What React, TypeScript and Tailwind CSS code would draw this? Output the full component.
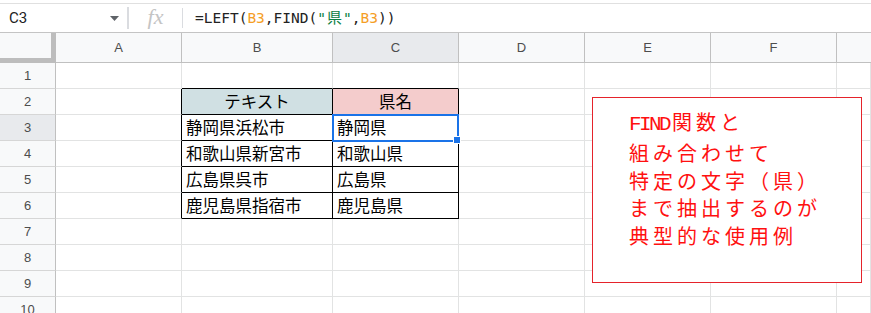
import React from 'react';

const COLS = ['A', 'B', 'C', 'D', 'E', 'F', ''];

// B2:C6 の内容
const cells: Record<string, string> = {
  'B2': 'テキスト',
  'C2': '県名',
  'B3': '静岡県浜松市',
  'C3': '静岡県',
  'B4': '和歌山県新宮市',
  'C4': '和歌山県',
  'B5': '広島県呉市',
  'C5': '広島県',
  'B6': '鹿児島県指宿市',
  'C6': '鹿児島県',
};

const FormulaBar: React.FC = () => (
  <div className="pt-[3px] bg-white">
    <div className="h-[30px] border-t border-b border-t-[#e0e0e0] border-b-[#c4c4c4] flex items-center">
      <div className="w-[127px] h-full flex items-center pl-[9px] pr-[8px] justify-between">
        <span className="text-[15px] text-[#222] font-['Roboto','Liberation_Sans',sans-serif]">C3</span>
        <svg width="9" height="5" viewBox="0 0 9 5">
          <path d="M0 0 L9 0 L4.5 5 Z" fill="#5f6368" />
        </svg>
      </div>
      <div className="w-[2px] h-[22px] bg-[#dadce0]" />
      <div className="w-[53px] flex items-center justify-center">
        <span className="italic text-[22px] leading-none text-[#c4c4c4] font-['Liberation_Serif',serif] -mt-[2px]">fx</span>
      </div>
      <div className="w-[1px] h-[20px] bg-[#dadce0]" />
      <div className="pl-[12px] text-[14.5px] text-[#222] font-['DejaVu_Sans_Mono',monospace] whitespace-pre">
        =LEFT(<span className="text-[#f59e26]">B3</span>,FIND(
        <span className="text-[#0b8043]">"</span>
        <span className="text-[#0b8043] inline-block w-[17px] text-center font-['Noto_Sans_CJK_JP',sans-serif] text-[15px]">県</span>
        <span className="text-[#0b8043]">"</span>,<span className="text-[#f59e26]">B3</span>))
      </div>
    </div>
  </div>
);

const Grid: React.FC = () => {
  const rows = Array.from({ length: 10 }, (_, i) => i + 1);
  return (
    <div className="grid grid-cols-[56px_126px_151px_126px_126px_126px_126px_1fr] grid-rows-[30px_repeat(10,26px)] font-['Liberation_Sans',Arial,sans-serif]">
      {/* 左上の固定枠 */}
      <div className="bg-[#f8f9fa] border-r-[5px] border-b-[5px] border-[#bdbdbd]" />
      {COLS.map((c, i) => (
        <div
          key={'h' + i}
          className={
            'flex items-center justify-center text-[13px] text-[#4d4d4d] border-b border-b-[#c0c0c0] ' +
            (i < 6 ? 'border-r border-r-[#c0c0c0] ' : '') +
            (c === 'C' ? 'bg-[#e8eaed]' : 'bg-[#f8f9fa]')
          }
        >
          {c}
        </div>
      ))}
      {rows.map((r) => (
        <React.Fragment key={r}>
          <div
            className={
              'flex items-center justify-center text-[13px] text-[#4d4d4d] border-r border-r-[#c0c0c0] border-b border-b-[#d6d6d6] ' +
              (r === 3 ? 'bg-[#e8eaed]' : 'bg-[#f8f9fa]')
            }
          >
            {r}
          </div>
          {COLS.map((c, ci) => {
            const key = c + r;
            const text = cells[key];
            const inTable = r >= 2 && r <= 6;
            const rightBlack = inTable && ci <= 2;
            const bottomBlack = ci >= 1 && ci <= 2 && r >= 1 && r <= 6;
            let bg = 'bg-white';
            if (key === 'B2') bg = 'bg-[#d0e0e3]';
            if (key === 'C2') bg = 'bg-[#f4cccc]';
            return (
              <div
                key={key + ci}
                className={
                  'flex items-center border-r border-b overflow-hidden whitespace-nowrap text-[16.5px] text-black font-[\'Noto_Sans_CJK_JP\',sans-serif] ' +
                  bg + ' ' +
                  (rightBlack ? 'border-r-black ' : 'border-r-[#e2e3e3] ') +
                  (bottomBlack ? 'border-b-black ' : 'border-b-[#e2e3e3] ') +
                  (r === 2 ? 'justify-center' : 'pl-[4px]')
                }
              >
                {text}
              </div>
            );
          })}
        </React.Fragment>
      ))}
    </div>
  );
};

const App: React.FC = () => {
  return (
    <div className="relative w-[871px] h-[313px] overflow-hidden bg-white">
      <FormulaBar />
      <Grid />

      {/* 選択セル C3 */}
      <div className="absolute left-[332px] top-[114px] w-[127px] h-[28px] border-2 border-[#1a73e8]" />
      <div className="absolute left-[453px] top-[136px] w-[8px] h-[8px] bg-[#1a73e8] border border-white" />

      {/* 図形（テキストボックス） */}
      <div className="absolute left-[592px] top-[97px] w-[270px] h-[186px] border border-[#e5232b] bg-white pl-[36px] pt-[10px]">
        <div className="text-[20px] leading-[27.75px] tracking-[4px] text-[#ff1010] font-['Noto_Sans_CJK_JP',sans-serif]">
          <div>
            <span className="font-['Liberation_Mono',monospace] text-[21px] tracking-[-2.6px] mr-[3px]">FIND</span>関数と
          </div>
          <div>組み合わせて</div>
          <div>特定の文字（県）</div>
          <div>まで抽出するのが</div>
          <div>典型的な使用例</div>
        </div>
      </div>
    </div>
  );
};

export default App;
